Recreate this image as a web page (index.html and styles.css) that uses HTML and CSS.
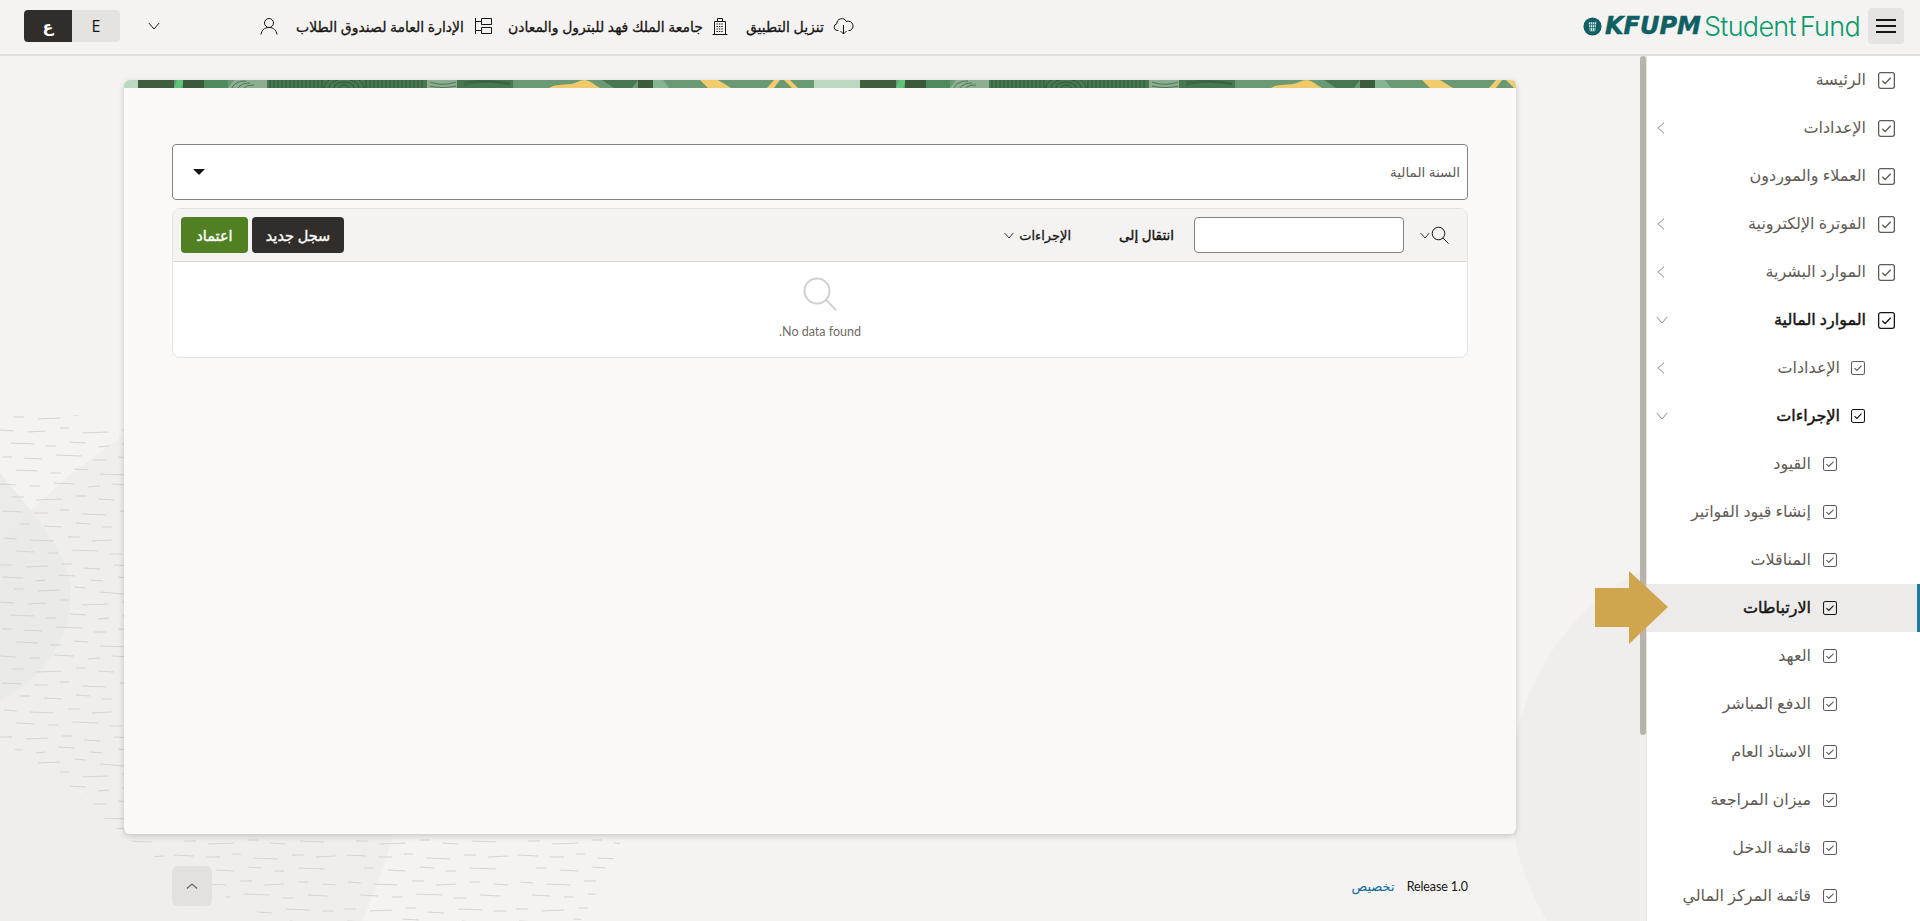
FILE: index.html
```html
<!DOCTYPE html>
<html lang="ar" dir="rtl">
<head>
<meta charset="utf-8">
<title>KFUPM Student Fund</title>
<link rel="stylesheet" href="styles.css">
</head>
<body>
<svg class="defs" aria-hidden="true">
  <defs>
    <symbol id="chk" viewBox="0 0 16 16">
      <rect x=".6" y=".6" width="14.8" height="14.8" rx="2" fill="none" stroke="currentColor" stroke-width="1.2"/>
      <path d="M4 8.2l2.7 2.6L12 5.4" fill="none" stroke="currentColor" stroke-width="1.3"/>
    </symbol>
    <symbol id="chev-left" viewBox="0 0 8 12"><path d="M7 .8L1 6l6 5.2" fill="none" stroke="currentColor" stroke-width="1"/></symbol>
    <symbol id="chev-down" viewBox="0 0 12 8"><path d="M.8 1L6 7l5.200-6" fill="none" stroke="currentColor" stroke-width="1"/></symbol>
  </defs>
</svg>

<header class="topbar">
  <button class="menu-btn" aria-label="menu"><span></span><span></span><span></span></button>
  <div class="logo">
    <svg class="logo-mark" viewBox="0 0 20 20">
      <circle cx="10" cy="10" r="9.500" fill="#0f5f63"/>
      <path d="M6 5.500h8l-1.200 9.500H7.200z" fill="#dfeeee"/>
      <path d="M8 5v10M10 5v10M12 5v10M6 8h8M6 11h8" stroke="#0f5f63" stroke-width=".7"/>
    </svg>
    <span class="logo-kfupm" dir="ltr">KFUPM</span>
    <span class="logo-fund" dir="ltr">Student Fund</span>
  </div>

  <div class="top-item top-first">
    <svg class="ic-cloud" viewBox="0 0 21 18"><path d="M5.500 13.500H4.200A3.400 3.400 0 0 1 3.800 6.800 5 5 0 0 1 13.300 4.500a4.500 4.500 0 0 1 3.700 9h-1.500" fill="none" stroke="#161513" stroke-width="1"/><path d="M10.500 8v9M7.500 14l3 3 3-3" fill="none" stroke="#161513" stroke-width="1"/></svg>
    <span>تنزيل التطبيق</span>
  </div>
  <div class="top-item top-bld">
    <svg class="ic-bld" viewBox="0 0 16 18"><path d="M.5 17.500h15M2.500 17.500V4.500h11v13M5.500 4.500V1.500h5v3" fill="none" stroke="#161513" stroke-width="1"/><path d="M4.500 7h7M4.500 9.500h7M4.500 12h7M4.500 14.500h7" stroke="#161513" stroke-width="1.200" stroke-dasharray="1.400 1"/></svg>
    <span>جامعة الملك فهد للبترول والمعادن</span>
  </div>
  <div class="top-item top-org">
    <svg class="ic-org" viewBox="0 0 18 18"><path d="M7.500 1.500h10v6h-10zM7.500 10.500h10v6h-10zM7.500 4.500H1.500v9h6" fill="none" stroke="#161513" stroke-width="1"/><path d="M1.500 1v16" stroke="#161513"/></svg>
    <span>الإدارة العامة لصندوق الطلاب</span>
  </div>
  <svg class="ic-user" viewBox="0 0 18 18"><circle cx="9" cy="6" r="4.500" fill="none" stroke="#161513"/><path d="M1 17.500c.6-4.200 3.300-7 8-7s7.400 2.800 8 7" fill="none" stroke="#161513"/></svg>
  <svg class="ic-chev" viewBox="0 0 12 8"><use href="#chev-down"/></svg>
  <div class="lang">
    <span class="lang-e">E</span>
    <span class="lang-a">ع</span>
  </div>
</header>

<div class="shell">
  <nav class="sidenav">
    <a class="row l1"><svg class="chk"><use href="#chk"/></svg><span>الرئيسة</span></a>
    <a class="row l1"><svg class="chk"><use href="#chk"/></svg><span>الإعدادات</span><svg class="cl"><use href="#chev-left"/></svg></a>
    <a class="row l1"><svg class="chk"><use href="#chk"/></svg><span>العملاء والموردون</span></a>
    <a class="row l1"><svg class="chk"><use href="#chk"/></svg><span>الفوترة الإلكترونية</span><svg class="cl"><use href="#chev-left"/></svg></a>
    <a class="row l1"><svg class="chk"><use href="#chk"/></svg><span>الموارد البشرية</span><svg class="cl"><use href="#chev-left"/></svg></a>
    <a class="row l1 open"><svg class="chk"><use href="#chk"/></svg><span>الموارد المالية</span><svg class="cd"><use href="#chev-down"/></svg></a>
    <a class="row l2"><svg class="chk"><use href="#chk"/></svg><span>الإعدادات</span><svg class="cl"><use href="#chev-left"/></svg></a>
    <a class="row l2 open"><svg class="chk"><use href="#chk"/></svg><span>الإجراءات</span><svg class="cd"><use href="#chev-down"/></svg></a>
    <a class="row l3"><svg class="chk"><use href="#chk"/></svg><span>القيود</span></a>
    <a class="row l3"><svg class="chk"><use href="#chk"/></svg><span>إنشاء قيود الفواتير</span></a>
    <a class="row l3"><svg class="chk"><use href="#chk"/></svg><span>المناقلات</span></a>
    <a class="row l3 active"><svg class="chk"><use href="#chk"/></svg><span>الارتباطات</span></a>
    <a class="row l3"><svg class="chk"><use href="#chk"/></svg><span>العهد</span></a>
    <a class="row l3"><svg class="chk"><use href="#chk"/></svg><span>الدفع المباشر</span></a>
    <a class="row l3"><svg class="chk"><use href="#chk"/></svg><span>الاستاذ العام</span></a>
    <a class="row l3"><svg class="chk"><use href="#chk"/></svg><span>ميزان المراجعة</span></a>
    <a class="row l3"><svg class="chk"><use href="#chk"/></svg><span>قائمة الدخل</span></a>
    <a class="row l3"><svg class="chk"><use href="#chk"/></svg><span>قائمة المركز المالي</span></a>
  </nav>

  <div class="scrollbar"><div class="thumb"></div></div>

  <main class="content">
    <svg class="backdrop" viewBox="0 0 1640 865" preserveAspectRatio="none" aria-hidden="true">
      <defs>
        <pattern id="dashes" width="172" height="172" patternUnits="userSpaceOnUse">
          <g stroke="#d5d4d2" stroke-width="1.100" fill="none">
            <path d="M3 5l20 1M36 9l9-1M58 3l17 1M90 8l13 1M118 5l18 2M150 10l16-1"/>
            <path d="M14 17l10 0M38 19l22-1M74 15l12 1M100 20l24 2M136 16l9 0M156 21l12 0"/>
            <path d="M0 30l14 1M28 32l18-1M60 28l9 0M82 33l26-1M122 30l12 1M146 34l20 1"/>
            <path d="M10 43l24 1M46 46l10 0M70 42l16 1M98 47l11-1M122 44l30-1"/>
            <path d="M2 57l10 0M24 58l18 1M56 55l26 1M94 60l12 0M118 57l16 1M148 59l12-1"/>
            <path d="M16 70l22 1M50 73l11 0M74 69l14 1M100 74l30 1M142 71l10 0"/>
            <path d="M0 84l16 1M30 86l10 0M54 83l20 1M88 87l12-1M112 84l18 1M144 87l18 1"/>
            <path d="M12 97l12 0M36 100l26-1M76 96l10 0M98 99l16 1M128 97l24 1"/>
            <path d="M2 111l20 1M34 113l14 0M60 110l9 0M82 114l24 1M120 111l12 0M144 113l20-1"/>
            <path d="M20 124l10 0M44 126l18 1M76 123l14 1M102 127l10 0M126 124l26 1"/>
            <path d="M4 138l13 1M30 140l24 1M68 137l12 0M92 141l20-1M126 138l10 0M150 140l14 1"/>
            <path d="M16 151l18 1M48 153l10 0M72 150l26 1M110 154l12 0M136 151l20 1"/>
            <path d="M0 165l12 0M26 167l22-1M62 164l10 0M84 168l16 1M114 165l24 1M150 167l12 0"/>
          </g>
        </pattern>
      </defs>
      <path class="bd-blob" d="M0 489C40 440 80 410 124 379L400 600 393 779C385 810 372 840 363 865H0Z"/>
      <circle class="bd-blob" cx="1760" cy="734" r="250"/>
      <path class="bd-drop" d="M0 417C40 464 71 504 71 538 71 584 40 624 0 645Z"/>
      <path d="M0 369L12 355C60 352 90 362 124 372H620V790C600 830 590 850 580 865H280C240 850 180 820 133 786L52 720 0 683Z" fill="url(#dashes)"/>
    </svg>

    <section class="card">
      <svg class="banner" aria-hidden="true">
        <defs>
          <pattern id="leaf" x="0" y="0" width="722" height="8" patternUnits="userSpaceOnUse">
            <rect width="722" height="8" fill="#6a9a74"/>
            <rect x="690" width="32" height="8" fill="#b9d9c1"/>
            <rect width="14" height="8" fill="#b9d9c1"/>
            <rect x="14" width="36" height="8" fill="#3d5f3e"/>
            <path d="M53 0h7l-3 8h-7z" fill="#5fc47a"/>
            <rect x="59" width="21" height="8" fill="#3b5a3a"/>
            <rect x="80" width="24" height="8" fill="#4f8a5c"/>
            <path d="M104 8l6-8h33v8z" fill="#8aae8f"/>
            <rect x="143" width="160" height="8" fill="#47774f"/>
            <rect x="303" width="30" height="8" fill="#8aae8f"/>
            <rect x="333" width="56" height="8" fill="#47774f"/>
            <path d="M108 8c2-5 8-7 14-7M114 8c2-3 6-5 12-5M120 8c2-2 5-3 10-3M306 2c8 3 18 3 26 0M306 6c8 2 18 2 26 0M340 6c10-5 30-5 46-1M340 2c12-2 30-2 46 1M340 4c10-3 30-3 46 0" fill="none" stroke="#2f5a3a" stroke-width=".7"/>
            <path d="M146 0v8M150 0v8M154 0v8M158 0v8M162 0v8M166 0v8M170 0v8M174 0v8M178 0v8M182 0v8M186 0v8M190 0v8M194 0v8M198 0v8M242 0v8M246 0v8M250 0v8M254 0v8M258 0v8M262 0v8M266 0v8M270 0v8M274 0v8M278 0v8M282 0v8M286 0v8M290 0v8M294 0v8M298 0v8" stroke="#2c5436" stroke-width="1"/>
            <path d="M200 8a20 12 0 0 1 40 0M205 8a15 9 0 0 1 30 0M210 8a10 6 0 0 1 20 0M215 8a5 3 0 0 1 10 0" fill="none" stroke="#2c5436" stroke-width=".9"/>
            <path d="M425 8c6-4 14-3 22-4 6-1 8-4 14-4 6 1 10 5 15 8z" fill="#f0c96a"/>
            <path d="M478 0h36l-6 8h-18z" fill="#477650"/>
            <rect x="514" width="15" height="8" fill="#3a5c3a"/>
            <path d="M529 0h10l6 8h-16z" fill="#86b594"/>
            <path d="M576 0h18l13 8h-23z" fill="#f2cb6c"/>
            <path d="M643 8l7-8h6l-6 8zM660 0h6l8 8h-6z" fill="#f2cb6c"/>
          </pattern>
        </defs>
        <rect width="100%" height="8" fill="url(#leaf)"/>
      </svg>
      <div class="card-body">
        <div class="select">
          <span class="select-label">السنة المالية</span>
          <span class="caret"></span>
        </div>
        <div class="table">
          <div class="toolbar">
            <svg class="ic-search" viewBox="0 0 18 18"><circle cx="7.500" cy="7.500" r="6.300" fill="none" stroke="#161513" stroke-width="1"/><path d="M12 12l5.500 5.500" stroke="#161513" stroke-width="1"/></svg>
            <svg class="ic-tchev" viewBox="0 0 12 8"><use href="#chev-down"/></svg>
            <input class="search-input" type="text" aria-label="بحث">
            <span class="goto">انتقال إلى</span>
            <span class="actions">الإجراءات</span>
            <svg class="ic-tchev" viewBox="0 0 12 8"><use href="#chev-down"/></svg>
            <button class="btn btn-dark">سجل جديد</button>
            <button class="btn btn-green">اعتماد</button>
          </div>
          <div class="empty">
            <svg class="ic-empty" viewBox="0 0 34 34"><circle cx="14" cy="14" r="12.500" fill="none" stroke="#d2d0ce" stroke-width="2"/><path d="M23 23l10 10" stroke="#d2d0ce" stroke-width="2"/></svg>
            <span>No data found.</span>
          </div>
        </div>
      </div>
    </section>

    <footer class="foot">
      <span class="release">Release 1.0</span>
      <a class="custom">تخصيص</a>
      <button class="up" aria-label="up"><svg viewBox="0 0 12 8"><path d="M1 6.500L6 2l5 4.500" fill="none" stroke="#6f6b67" stroke-width="1.300"/></svg></button>
    </footer>
  </main>
</div>

<svg class="arrow" viewBox="0 0 73 73" aria-hidden="true"><path d="M0 17h34V0l39 36L34 73V56H0z" fill="#cfa64e"/></svg>
</body>
</html>
```
FILE: styles.css
```css
* { box-sizing: border-box; }
html, body { height: 100%; }
body {
  margin: 0;
  overflow: hidden;
  position: relative;
  background: #f4f3f2;
  color: #161513;
  font-family: "Open Sans", "Noto Sans", "DejaVu Sans", sans-serif;
  font-size: 14px;
}
.defs { position: absolute; width: 0; height: 0; }

/* top bar */
.topbar {
  height: 56px;
  display: flex;
  align-items: center;
  padding: 0 16px 2px 24px;
  background: #f4f3f2;
  border-bottom: 2px solid #dfdedc;
}
.menu-btn {
  width: 36px; height: 36px;
  display: flex; flex-direction: column; justify-content: center; align-items: center; gap: 4px;
  background: #e5e4e1;
  border: 0; border-radius: 4px; padding: 0;
}
.menu-btn span { display: block; width: 20px; height: 2px; background: #161513; }
.logo { display: flex; align-items: center; margin-right: 8px; flex-direction: row-reverse; }
.logo-mark { width: 19px; height: 19px; margin-right: 3px; }
.logo-kfupm {
  font-family: "DejaVu Sans", sans-serif; font-weight: 700; font-style: italic; font-size: 24px; line-height: 1;
  color: #0f5f63; letter-spacing: 0; margin-right: 3px;
  -webkit-text-stroke: .5px #0f5f63;
}
.logo-fund {
  font-family: Inter, sans-serif; font-weight: 300; font-size: 27px; line-height: 1;
  color: #0a9a6b; letter-spacing: -.7px; word-spacing: -3px;
}
.top-item { display: flex; align-items: center; gap: 9px; font-size: 14px; -webkit-text-stroke: .3px #161513; }
.top-first { margin-right: auto; }
.top-bld { margin-right: 18px; }
.top-org { margin-right: 16px; gap: 10px; }
.ic-cloud { width: 21px; height: 18px; }
.ic-bld { width: 16px; height: 18px; }
.ic-org { width: 18px; height: 18px; }
.ic-user { width: 18px; height: 18px; margin-right: 18px; }
.ic-chev { width: 12px; height: 8px; margin-right: 100px; color: #161513; }
.lang { display: flex; width: 96px; height: 32px; margin-right: 28px; border-radius: 4px; overflow: hidden; font-size: 16px; }
.lang span { flex: 1; display: flex; align-items: center; justify-content: center; }
.lang-e { background: #e4e3e0; }
.lang-a { background: #312d2a; color: #fff; font-weight: 700; }

/* frame */
.shell { display: flex; height: calc(100% - 56px); }
.sidenav { width: 274px; flex: none; background: #fff; overflow: hidden; border-left: 1px solid #e4e3e0; }
.scrollbar { width: 6px; flex: none; background: #f1f0ee; }
.thumb { height: 679px; background: #b8b4ad; border-radius: 3px; }
.content { flex: 1; min-width: 0; position: relative; overflow: hidden; padding: 24px 124px 0; }

/* menu */
.row { display: flex; align-items: center; height: 48px; color: #5f5b57; font-size: 16px; }
.row .chk { flex: none; }
.row span { margin-bottom: 2px; }
.l1 { padding-right: 25px; gap: 12px; }
.l1 .chk { width: 17px; height: 17px; }
.l2 { padding-right: 55px; gap: 11px; }
.l3 { padding-right: 83px; gap: 12px; }
.l2 .chk, .l3 .chk { width: 14px; height: 14px; }
.open { color: #161513; -webkit-text-stroke: .45px #161513; }
.active { color: #161513; -webkit-text-stroke: .45px #161513; background: #ecebe9; box-shadow: inset -3px 0 0 #1f7a99; }
.cl { width: 8px; height: 12px; margin-right: auto; margin-left: 10px; color: #8d8985; flex: none; }
.cd { width: 12px; height: 8px; margin-right: auto; margin-left: 9px; color: #8d8985; flex: none; }

/* backdrop */
.backdrop { position: absolute; inset: 0; width: 100%; height: 100%; }
.bd-blob { fill: #efeeec; }
.bd-drop { fill: #e9e8e6; opacity: .8; }

/* card */
.card {
  position: relative;
  height: 754px;
  background: #faf9f7;
  border-radius: 6px;
  overflow: hidden;
  box-shadow: 0 2px 6px rgba(0,0,0,.18);
}
.banner { display: block; width: 100%; height: 8px; }
.card-body { padding: 56px 48px 0; }
.select {
  height: 56px;
  display: flex; align-items: center; justify-content: space-between;
  padding: 0 7px 0 20px;
  background: #fff;
  border: 1px solid #86827e;
  border-radius: 4px;
}
.select-label { font-size: 13.5px; color: #5f5b57; }
.caret { width: 0; height: 0; border: 6px solid transparent; border-top-color: #161513; border-bottom: 0; }
.table { margin-top: 8px; border: 1px solid #e4e3e0; border-radius: 8px; overflow: hidden; background: #fff; }
.toolbar {
  height: 53px;
  display: flex; align-items: center;
  padding: 0 18px 0 8px;
  background: #f4f3f2;
  border-bottom: 1px solid #d8d7d4;
}
.ic-search { width: 18px; height: 18px; flex: none; }
.ic-tchev { width: 10px; height: 7px; flex: none; margin-right: 1px; color: #161513; }
.search-input {
  width: 210px; height: 36px; margin-right: 16px;
  border: 1px solid #86827e; border-radius: 4px; background: #fff;
}
.goto { font-size: 13.5px; margin-right: 20px; -webkit-text-stroke: .4px #161513; }
.actions { font-size: 13px; margin-right: 48px; -webkit-text-stroke: .3px #161513; }
.actions + .ic-tchev { margin-right: 5px; }
.btn { height: 36px; border: 0; border-radius: 4px; color: #fff; font: 400 14.500px "Open Sans", "Noto Sans", "DejaVu Sans", sans-serif; -webkit-text-stroke: .4px #fff; padding: 0; }
.btn-dark { width: 92px; background: #312d2a; margin-right: auto; }
.btn-green { width: 67px; background: #508022; margin-right: 4px; }
.empty { height: 95px; display: flex; flex-direction: column; align-items: center; color: #6f6b67; font: 12.5px Lato, "Open Sans", sans-serif; padding-top: 15px; }
.ic-empty { width: 34px; height: 34px; margin-bottom: 13px; }

/* footer */
.foot { position: relative; display: flex; align-items: center; height: 40px; margin-top: 32px; padding: 0 48px; font-size: 13px; }
.release { font-family: Lato, "Open Sans", sans-serif; font-size: 12.5px; letter-spacing: -.1px; }
.custom { color: #0f6f9f; margin-right: 12px; }
.up { margin-right: auto; width: 40px; height: 40px; border: 0; border-radius: 6px; background: #e2e1df; padding: 0; display: flex; align-items: center; justify-content: center; }
.up svg { width: 12px; height: 8px; }

/* callout arrow */
.arrow { position: absolute; top: 571px; right: 252px; width: 73px; height: 73px; }
```
